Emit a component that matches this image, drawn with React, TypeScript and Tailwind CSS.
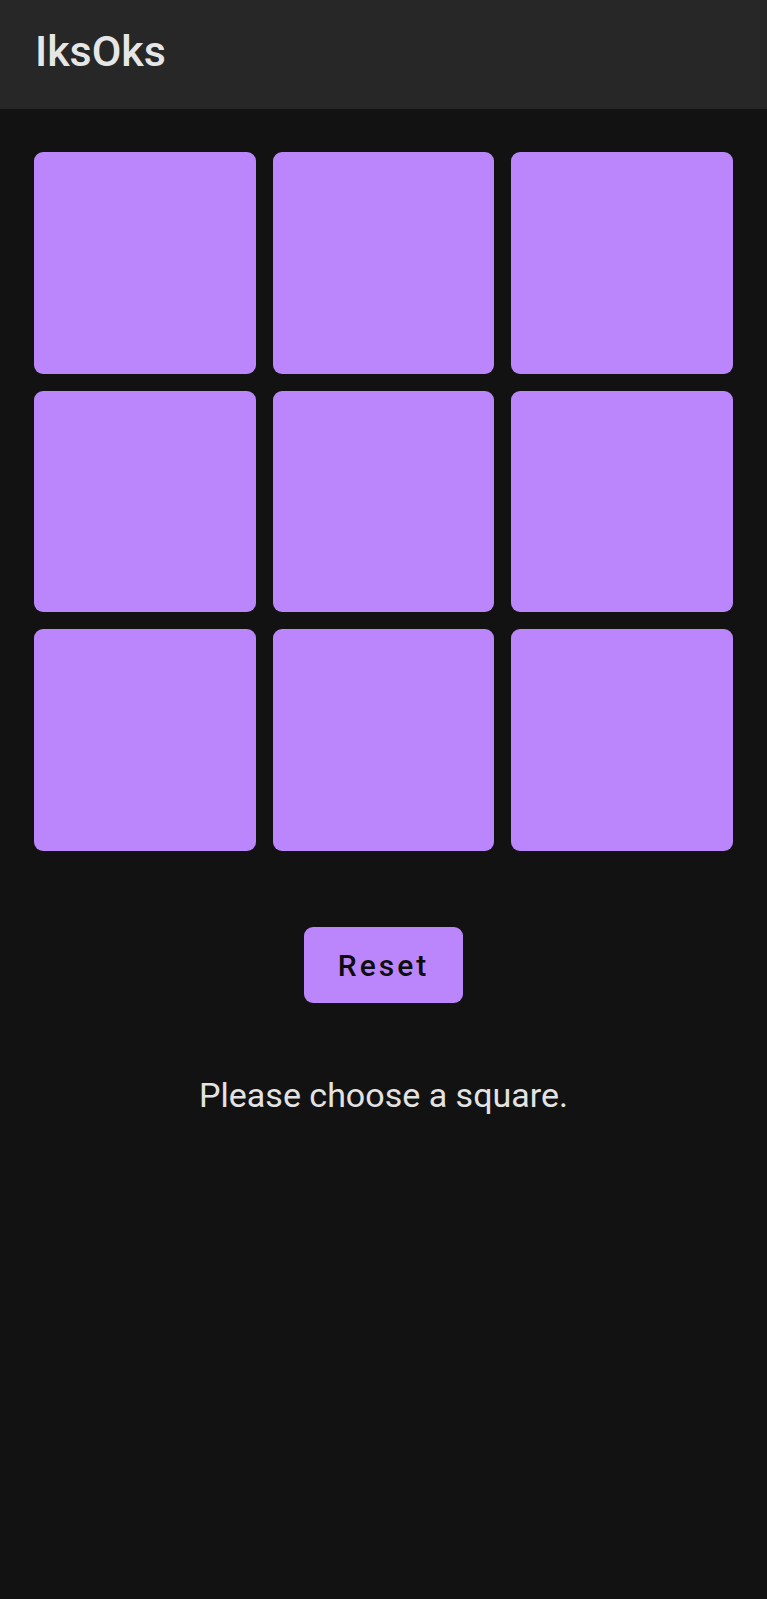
import React, { useState } from 'react';

type Mark = 'X' | 'O' | null;

const App: React.FC = () => {
  const [squares, setSquares] = useState<Mark[]>(Array(9).fill(null));
  const [next, setNext] = useState<'X' | 'O'>('X');

  const choose = (i: number) => {
    if (squares[i]) return;
    const copy = squares.slice();
    copy[i] = next;
    setSquares(copy);
    setNext(next === 'X' ? 'O' : 'X');
  };

  const reset = () => {
    setSquares(Array(9).fill(null));
    setNext('X');
  };

  return (
    <div className="min-h-[1599px] w-full bg-[#121212] font-['Roboto',sans-serif]">
      {/* Toolbar */}
      <header className="h-[109px] bg-[#272727] px-[35px] flex items-center">
        <h1 className="text-[43px] font-medium text-[#e6e6e6] leading-none -mt-[6px]">IksOks</h1>
      </header>

      <main className="px-[34px] pt-[43px] flex flex-col items-center">
        <div className="grid grid-cols-3 gap-[17px] w-full">
          {squares.map((s, i) => (
            <button
              key={i}
              onClick={() => choose(i)}
              className="aspect-square rounded-[9px] bg-[#bb86fc] text-black text-[96px] font-medium flex items-center justify-center"
            >
              {s}
            </button>
          ))}
        </div>

        <button
          onClick={reset}
          className="mt-[76px] w-[159px] h-[76px] rounded-[9px] bg-[#bb86fc] text-[#0d0d0d] text-[30px] font-medium tracking-[0.1em] flex items-center justify-center"
        >
          Reset
        </button>

        <p className="mt-[72px] text-[34px] leading-[40px] text-[#e3e3e3]">Please choose a square.</p>
      </main>
    </div>
  );
};

export default App;
